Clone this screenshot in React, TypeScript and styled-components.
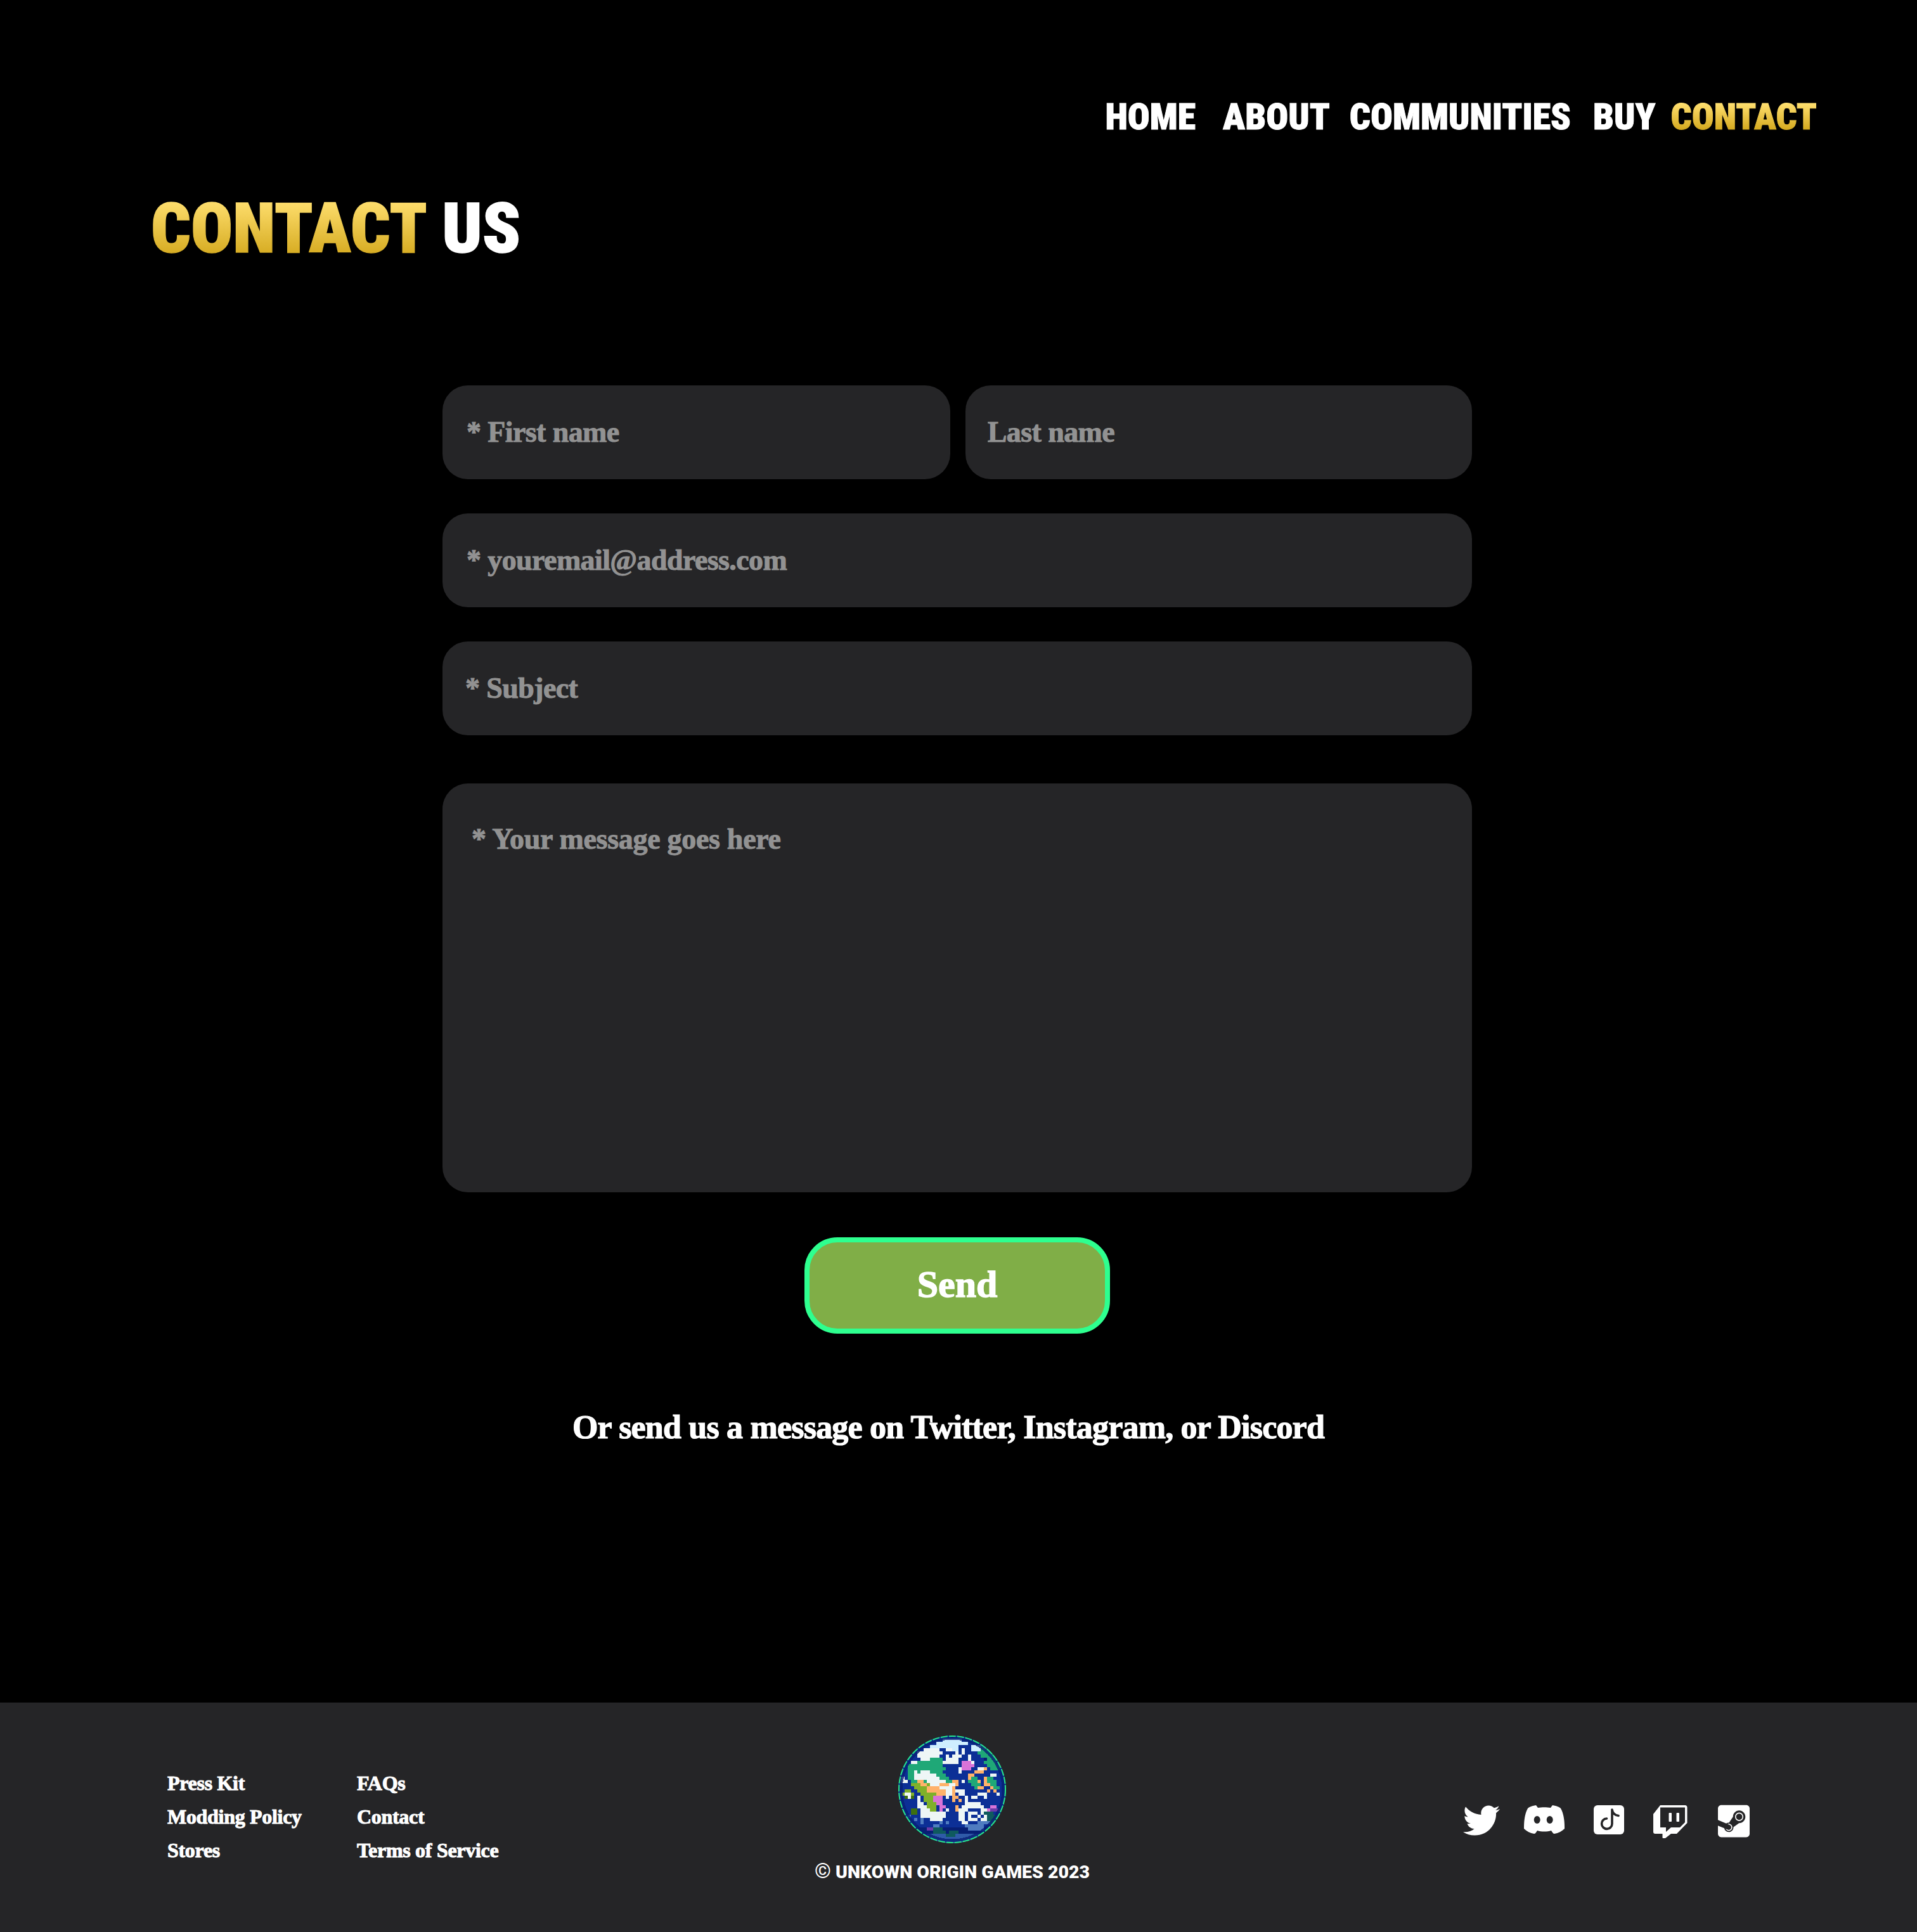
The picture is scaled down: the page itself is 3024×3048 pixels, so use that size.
import React from 'react'
import styled, { createGlobalStyle } from 'styled-components'
import { FaTwitter, FaSteamSquare } from 'react-icons/fa'

const GlobalStyle = createGlobalStyle`
  * { box-sizing: border-box; }
  body { margin: 0; background: #000; }
`
const serif = `"Liberation Serif", serif`
const display = `Roboto, "Open Sans", sans-serif`

const Page = styled.div`
  min-height: 3048px;
  display: flex;
  flex-direction: column;
  color: #fff;
`
const Nav = styled.nav`
  display: flex;
  justify-content: flex-end;
  padding: 154px 158px 0 0;
`
const NavLink = styled.a<{ $gap: number; $active?: boolean }>`
  margin-left: ${(p) => p.$gap}px;
  font: 900 58px/60px ${display};
  font-stretch: condensed;
  color: #fff;
  -webkit-text-stroke: 1px ${(p) => (p.$active ? 'transparent' : '#fff')};
  ${(p) =>
    p.$active &&
    `
    background: linear-gradient(#ffdf6f 15%, #d4a91e 85%);
    -webkit-background-clip: text;
    background-clip: text;
    color: transparent;
  `}
`
const Title = styled.h1`
  margin: 87px 0 0 238px;
  font: 900 110px/120px ${display};
  font-stretch: condensed;
  -webkit-text-stroke: 1.5px #fff;
`
const Gold = styled.span`
  background: linear-gradient(#ffdf6f 15%, #d4a91e 85%);
  -webkit-background-clip: text;
  background-clip: text;
  color: transparent;
  -webkit-text-stroke: 1.5px transparent;
`
const Form = styled.form`
  width: 1624px;
  margin: 187px 0 0 698px;
  display: flex;
  flex-direction: column;
  gap: 54px;
`
const Row = styled.div`
  display: flex;
  gap: 24px;
`
const Field = styled.input<{ $pad?: number }>`
  width: 100%;
  min-width: 0;
  height: 148px;
  padding: 0 0 2px ${(p) => p.$pad || 38}px;
  border: none;
  outline: none;
  border-radius: 40px;
  background: #252527;
  font: 700 46px ${serif};
  letter-spacing: -0.6px;
  -webkit-text-stroke: 1px #929292;
  color: #929292;
  &::placeholder {
    color: #929292;
    opacity: 1;
  }
`
const Message = styled.textarea`
  display: block;
  width: 100%;
  height: 645px;
  margin-top: 22px;
  padding: 61px 46px;
  border: none;
  outline: none;
  resize: none;
  overflow: hidden;
  border-radius: 40px;
  background: #252527;
  font: 700 46px ${serif};
  letter-spacing: -0.3px;
  -webkit-text-stroke: 1px #929292;
  color: #929292;
  &::placeholder {
    color: #929292;
    opacity: 1;
  }
`
const SendButton = styled.button`
  align-self: center;
  width: 482px;
  height: 152px;
  margin-top: 17px;
  padding: 0 0 3px;
  border: 8px solid #2eff8f;
  border-radius: 52px;
  background: #80ae47;
  color: #fff;
  font: 700 60px ${serif};
  -webkit-text-stroke: 1.4px #fff;
`
const Alt = styled.p`
  margin: 118px 32px 0 0;
  text-align: center;
  font: 700 52px/60px ${serif};
  letter-spacing: -0.8px;
  -webkit-text-stroke: 1.2px #fff;
`
const Footer = styled.footer`
  margin-top: auto;
  height: 362px;
  background: #252527;
  display: grid;
  grid-template-columns: 998px 480px 1fr;
  padding-left: 264px;
  align-items: start;
`
const LinkGroups = styled.div`
  display: flex;
  padding-top: 101px;
`
const LinkColumn = styled.div<{ $width: number }>`
  width: ${(p) => p.$width}px;
  display: flex;
  flex-direction: column;
`
const FootLink = styled.a`
  font: 700 32px/53px ${serif};
  letter-spacing: -0.3px;
  -webkit-text-stroke: 1px #fff;
  color: #fff;
  white-space: nowrap;
`
const Brand = styled.div`
  display: flex;
  flex-direction: column;
  align-items: center;
  padding-top: 52px;
`
const Copyright = styled.div`
  margin-top: 24px;
  font: 900 28.5px/40px ${display};
  white-space: nowrap;
`
const CopySign = styled.span`
  font-weight: 400;
  font-size: 33px;
`
const Socials = styled.div`
  display: flex;
  align-items: flex-start;
  margin: 162px 0 0 566px;
`
const Social = styled.a<{ $gap: number; $width: number; $top?: number }>`
  display: flex;
  margin-left: ${(p) => p.$gap}px;
  margin-top: ${(p) => p.$top || 0}px;
  width: ${(p) => p.$width}px;
  color: #fff;
  svg {
    display: block;
    flex: none;
  }
`
const SteamIcon = styled(FaSteamSquare)`
  width: 50px;
  height: 58px;
`

const globeColors: Record<string, string> = {
  o: '#0c2f96',
  d: '#071f74',
  w: '#eef6f6',
  l: '#cfeeff',
  g: '#1fa877',
  G: '#7fb02a',
  D: '#3d6f10',
  p: '#ffb26a',
  m: '#d873d8',
  v: '#6a3aa8',
  b: '#4f7cc0',
  t: '#0f5a5e',
  n: '#2f5aa8',
}
// run-length rows: count + colour key, one row per art pixel
const globeRows = [
  '34o',
  '14o6l',
  '12o10l',
  '10o9l4o3l1g',
  '8o5w2o2w2l1o1w2o3l3g',
  '6o8w4o1w1o1w4o5g',
  '6o7w2o1w1o3w2o1w3o5g',
  '7o3w4g1o4w3o1w4o1d4g',
  '4o2w8g5w1o3m1w3o4g',
  '3o11g6o4m4o4g',
  '3o12g4o1w3m2o2w1p1o3g',
  '3o2g1w1g3w4g5o1w4o3p',
  '3o2g7w3g7o2p5o2w',
  '1o1w1o2g8w3g6o1p2g2o1p2g',
  '1o2w1o2g2p1g6w2g2p1o1w1o3g1p1o1p3g',
  '4o3G2p1G3w3p2w1p4o3g1o2p2g',
  '5o4G4p4w1p6o1g2p2o1p2g',
  '2o2G2o3G6p2w1p3w7o1p1o1p',
  '1o1G2w1G2o5G3p2w1p1o2w4o3w3o1w',
  '2o1D1w1D1o1w1o3G3m1o1w1o2p2o1w1o2w2o1w',
  '6o1w1o3G3m3o1p1o1p1o1w',
  '6o2w1o3G2m7o5w',
  '6o3w3G1o2m3o1p1o7w2o2m',
  '4o2D1o3w2G1o1m1o1w2o1p3w4o2w1m3v',
  '1o1b2o2D1o8w4o2w1o3w1o1w3t',
  '3o1b3o8w4o2w1o1w2o1w1o1w3t',
  '5o1b1o1b2o4w5o2w1o3w1o2w3t',
  '7o1b5o1b1o1b4o2w3o4b2t',
  '11o2b8o6b',
  '9d2v3t8d5b9d',
  '11d4t1d3t15d',
  '9d6n3t8n8d',
  '10d14n10d',
  '12d10n12d',
]

// planet logo, drawn cell by cell as in the pixel art original
const Globe = () => (
  <svg width="170" height="170" viewBox="0 0 34 34" shapeRendering="crispEdges">
    <defs>
      <clipPath id="globe-clip">
        <circle cx="17" cy="17" r="17" />
      </clipPath>
    </defs>
    <g clipPath="url(#globe-clip)">
      <rect width="34" height="34" fill={globeColors.o} />
      {globeRows.map((row, y) => {
        let x = 0
        return Array.from(row.matchAll(/(\d+)(\w)/g)).map((m) => {
          const w = Number(m[1])
          const cell = <rect key={y + '-' + x} x={x} y={y} width={w} height="1" fill={globeColors[m[2]]} />
          x += w
          return cell
        })
      })}
    </g>
    <circle cx="17" cy="17" r="16.2" fill="none" stroke="#071f74" strokeWidth="1" opacity="0.8" />
    <circle
      cx="17"
      cy="17"
      r="16.8"
      fill="none"
      stroke="#27e58a"
      strokeWidth="0.4"
      strokeDasharray="2.2 0.4"
      shapeRendering="geometricPrecision"
    />
  </svg>
)

const DiscordIcon = () => (
  <svg width="64" height="46" viewBox="0 0 64 46">
    <path
      d="M19 0C12 1 8 3 6 5C2 12 0 22 0 35V37C4 41 10 44 16 45Q18 45 19 43L21 40C28 42 36 42 43 40L45 43Q46 45 48 45C54 44 60 41 64 37V35C64 22 62 12 58 5C56 3 52 1 45 0L42 4C36 3 28 3 22 4Z"
      fill="#fff"
    />
    <ellipse cx="20.7" cy="23" rx="5" ry="6" fill="#252527" />
    <ellipse cx="40.7" cy="23" rx="5" ry="6" fill="#252527" />
  </svg>
)

const TikTokIcon = () => (
  <svg width="48" height="46" viewBox="0 0 48 46">
    <rect width="48" height="46" rx="6" fill="#fff" />
    <path
      d="M29 7V29A8.2 8.2 0 1 1 20.5 21M29 7C30 13 34 16 39 16.5"
      fill="none"
      stroke="#252527"
      strokeWidth="3.6"
      strokeLinecap="round"
    />
  </svg>
)

const TwitchIcon = () => (
  <svg width="54" height="52" viewBox="0 0 54 52">
    <path
      d="M11 0H50Q53.5 0 53.5 3.5V28L37 45H28L19 52H15.5Q14.5 52 14.5 51V45H3Q0 45 0 42V14Z"
      fill="#fff"
    />
    <path d="M11 3.5H50V27L42 35H28L20 42V35H11Z" fill="#252527" />
    <rect x="24.5" y="12" width="4.5" height="14" rx="1" fill="#fff" />
    <rect x="36.5" y="12" width="4.5" height="14" rx="1" fill="#fff" />
  </svg>
)

export default function App() {
  return (
    <Page>
      <GlobalStyle />
      <Nav>
        <NavLink $gap={0}>HOME</NavLink>
        <NavLink $gap={43}>ABOUT</NavLink>
        <NavLink $gap={31}>COMMUNITIES</NavLink>
        <NavLink $gap={35}>BUY</NavLink>
        <NavLink $gap={24} $active>
          CONTACT
        </NavLink>
      </Nav>
      <Title>
        <Gold>CONTACT</Gold> US
      </Title>
      <Form>
        <Row>
          <Field placeholder="* First name" />
          <Field placeholder="Last name" $pad={35} />
        </Row>
        <Field placeholder="* youremail@address.com" />
        <Field placeholder="* Subject" $pad={36} />
        <Message placeholder="* Your message goes here" />
        <SendButton type="button">Send</SendButton>
      </Form>
      <Alt>Or send us a message on Twitter, Instagram, or Discord</Alt>
      <Footer>
        <LinkGroups>
          <LinkColumn $width={299}>
            <FootLink>Press Kit</FootLink>
            <FootLink>Modding Policy</FootLink>
            <FootLink>Stores</FootLink>
          </LinkColumn>
          <LinkColumn $width={300}>
            <FootLink>FAQs</FootLink>
            <FootLink>Contact</FootLink>
            <FootLink>Terms of Service</FootLink>
          </LinkColumn>
        </LinkGroups>
        <Brand>
          <Globe />
          <Copyright>
            <CopySign>©</CopySign> UNKOWN ORIGIN GAMES 2023
          </Copyright>
        </Brand>
        <Socials>
          <Social $gap={0} $width={58} $top={-5}>
            <FaTwitter size={58} />
          </Social>
          <Social $gap={38} $width={64}>
            <DiscordIcon />
          </Social>
          <Social $gap={46} $width={48}>
            <TikTokIcon />
          </Social>
          <Social $gap={46} $width={54}>
            <TwitchIcon />
          </Social>
          <Social $gap={48} $width={50} $top={-4}>
            <SteamIcon preserveAspectRatio="none" />
          </Social>
        </Socials>
      </Footer>
    </Page>
  )
}
